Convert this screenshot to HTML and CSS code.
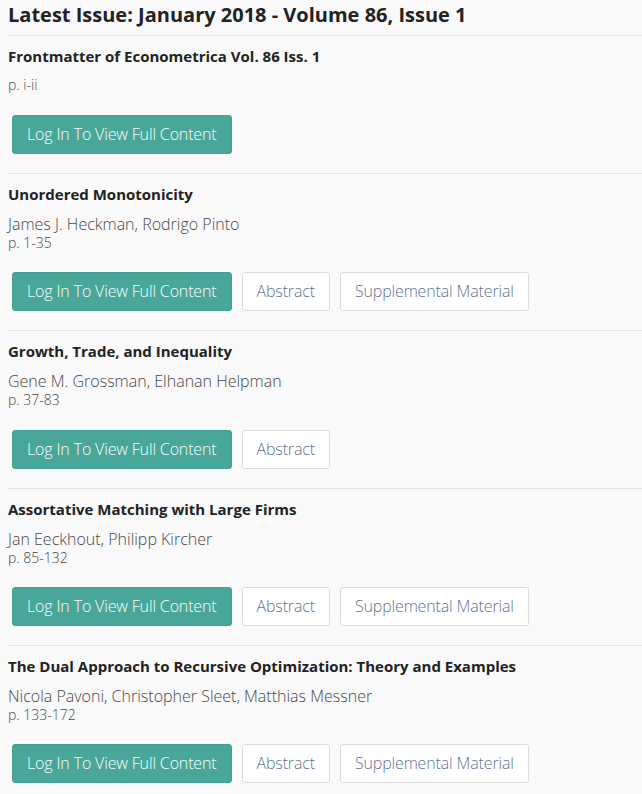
FILE: index.html
```html
<!DOCTYPE html>
<html>
<head>
<meta charset="utf-8">
<link rel="stylesheet" href="styles.css">
</head>
<body>
<div class="page">
  <h1 class="issue-title">Latest Issue: January 2018 - Volume 86, Issue 1</h1>

  <div class="article article-first">
    <h2 class="article-title">Frontmatter of Econometrica Vol. 86 Iss. 1</h2>
    <p class="pages pages-solo">p. i-ii</p>
    <div class="actions">
      <a class="btn btn-primary">Log In To View Full Content</a>
    </div>
  </div>

  <div class="article">
    <h2 class="article-title">Unordered Monotonicity</h2>
    <div class="authors">James J. Heckman, Rodrigo Pinto</div>
    <div class="pages">p. 1-35</div>
    <div class="actions">
      <a class="btn btn-primary">Log In To View Full Content</a>
      <a class="btn btn-default">Abstract</a>
      <a class="btn btn-default">Supplemental Material</a>
    </div>
  </div>

  <div class="article">
    <h2 class="article-title">Growth, Trade, and Inequality</h2>
    <div class="authors">Gene M. Grossman, Elhanan Helpman</div>
    <div class="pages">p. 37-83</div>
    <div class="actions">
      <a class="btn btn-primary">Log In To View Full Content</a>
      <a class="btn btn-default">Abstract</a>
    </div>
  </div>

  <div class="article">
    <h2 class="article-title">Assortative Matching with Large Firms</h2>
    <div class="authors">Jan Eeckhout, Philipp Kircher</div>
    <div class="pages">p. 85-132</div>
    <div class="actions">
      <a class="btn btn-primary">Log In To View Full Content</a>
      <a class="btn btn-default">Abstract</a>
      <a class="btn btn-default">Supplemental Material</a>
    </div>
  </div>

  <div class="article">
    <h2 class="article-title">The Dual Approach to Recursive Optimization: Theory and Examples</h2>
    <div class="authors">Nicola Pavoni, Christopher Sleet, Matthias Messner</div>
    <div class="pages">p. 133-172</div>
    <div class="actions">
      <a class="btn btn-primary">Log In To View Full Content</a>
      <a class="btn btn-default">Abstract</a>
      <a class="btn btn-default">Supplemental Material</a>
    </div>
  </div>
</div>
</body>
</html>
```

FILE: styles.css
```css
html, body {
  margin: 0;
  padding: 0;
  background: #f9f9f9;
}
body {
  font-family: "Open Sans", "Liberation Sans", sans-serif;
  color: #222;
  overflow: hidden;
}
.page {
  padding-left: 8px;
}
.issue-title {
  margin: 0;
  padding-top: 1px;
  font-size: 20px;
  line-height: 28px;
  font-weight: 700;
  color: #222;
  height: 34px;
  border-bottom: 1px solid #e3e3e3;
}
.article {
  border-bottom: 1px solid #e3e3e3;
  padding-top: 10px;
  padding-bottom: 19px;
}
.article-title {
  margin: 0;
  font-size: 15px;
  line-height: 20px;
  font-weight: 700;
  color: #222;
}
.authors {
  margin-top: 9px;
  font-size: 16px;
  line-height: 22px;
  font-weight: 300;
  color: #484848;
}
.pages {
  font-size: 14px;
  line-height: 15.33px;
  font-weight: 300;
  color: #484848;
}
.pages-solo {
  margin: 11px 0 0;
  line-height: 16px;
}
.actions {
  display: flex;
  gap: 10px;
  margin-top: 22px;
  padding-left: 4px;
}
.btn {
  display: block;
  box-sizing: border-box;
  height: 39px;
  line-height: 37px;
  padding: 0 14px;
  font-size: 16px;
  font-weight: 300;
  letter-spacing: -0.15px;
  border-radius: 3px;
  border: 1px solid transparent;
  white-space: nowrap;
}
.btn-primary {
  background: #48a799;
  border-color: #43a093;
  color: #fff;
}
.btn-default {
  background: #fff;
  border-color: #dcdcdc;
  color: #62748f;
}
```
